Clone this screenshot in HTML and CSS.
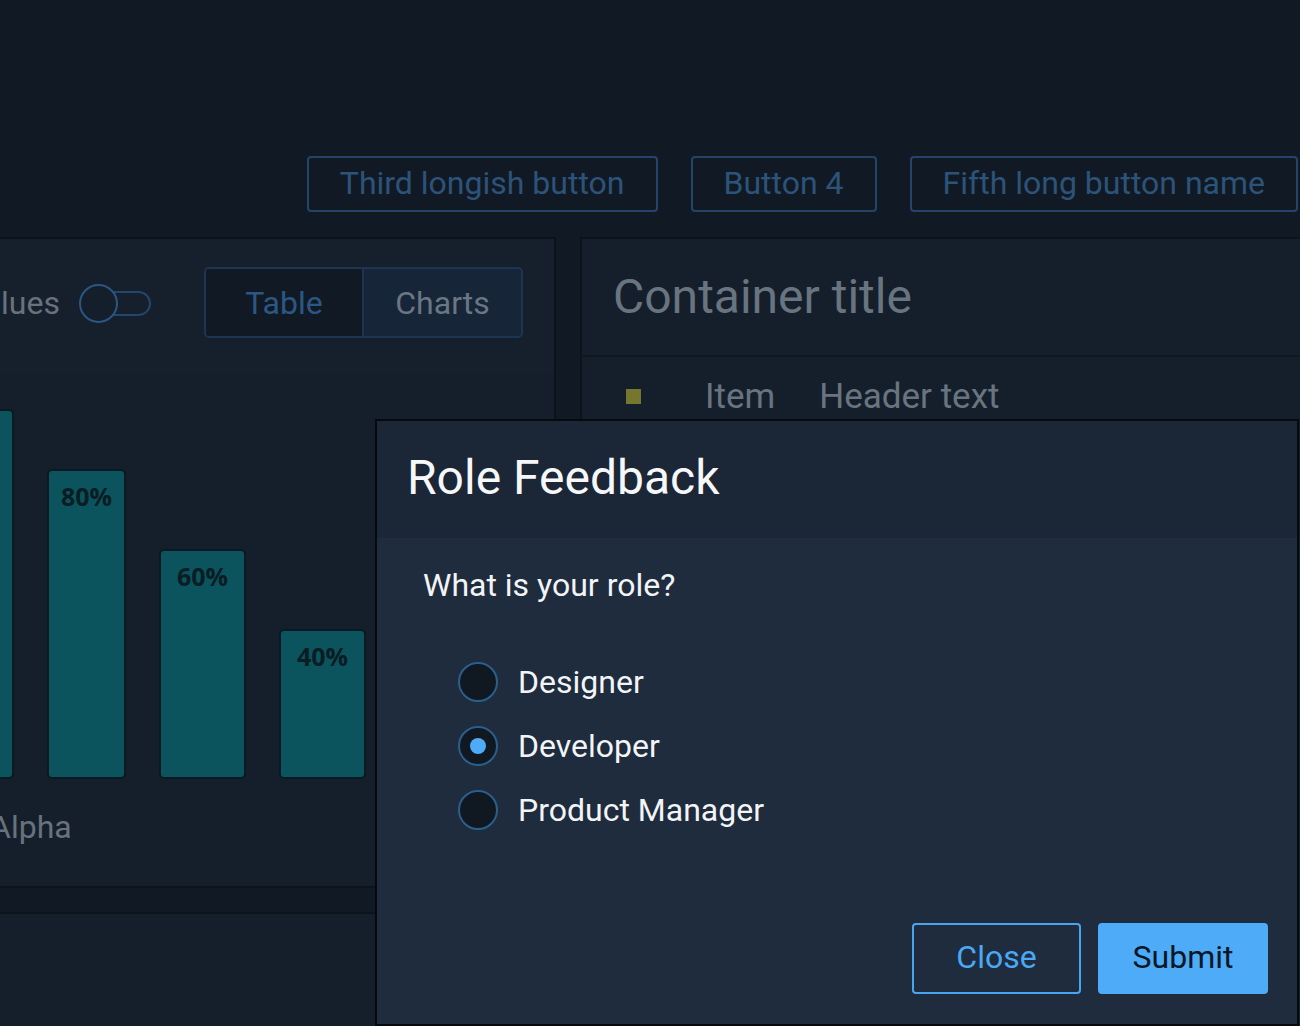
FILE: index.html
```html
<!DOCTYPE html>
<html lang="en">
<head>
<meta charset="utf-8">
<title>Role Feedback</title>
<link rel="stylesheet" href="styles.css">
</head>
<body>
<div class="topbar">
  <button class="ghost-btn">Third longish button</button>
  <button class="ghost-btn">Button 4</button>
  <button class="ghost-btn">Fifth long button name</button>
</div>

<div class="panels">
  <div class="col-left">
    <section class="panel chart-panel">
      <div class="chart-toolbar">
        <span class="muted-label">Values</span>
        <span class="toggle"><span class="toggle-track"></span><span class="toggle-knob"></span></span>
        <div class="segmented">
          <span class="seg seg-active">Table</span>
          <span class="seg seg-other">Charts</span>
        </div>
      </div>
      <div class="chart">
        <div class="bars">
          <div class="bar bar-wide bar-95"><span>95%</span></div>
          <div class="bar bar-narrow bar-80"><span>80%</span></div>
          <div class="bar bar-wide bar-60"><span>60%</span></div>
          <div class="bar bar-wide bar-40"><span>40%</span></div>
        </div>
        <div class="axis"><span class="muted-label">Alpha</span></div>
      </div>
    </section>
    <section class="panel lower-panel"></section>
  </div>

  <section class="panel right-panel">
    <header class="container-head">Container title</header>
    <div class="table-head">
      <span class="swatch"></span>
      <span class="th">Item</span>
      <span class="th">Header text</span>
    </div>
  </section>
</div>

<div class="modal">
  <div class="modal-head">Role Feedback</div>
  <div class="modal-body">
    <p class="question">What is your role?</p>
    <div class="radios">
      <label class="radio-row"><span class="radio"></span><span>Designer</span></label>
      <label class="radio-row"><span class="radio radio-on"></span><span>Developer</span></label>
      <label class="radio-row"><span class="radio"></span><span>Product Manager</span></label>
    </div>
    <div class="modal-foot">
      <button class="btn-outline">Close</button>
      <button class="btn-solid">Submit</button>
    </div>
  </div>
</div>
</body>
</html>
```

FILE: styles.css
```css
* { box-sizing: border-box; }

html, body {
  margin: 0;
  padding: 0;
}

body {
  width: 1300px;
  height: 1026px;
  overflow: hidden;
  background: #111a24;
  font-family: Roboto, "Liberation Sans", sans-serif;
  position: relative;
}

button {
  font-family: inherit;
  cursor: pointer;
}

/* top row of buttons */
.topbar {
  display: flex;
  justify-content: flex-end;
  gap: 33px;
  padding: 156px 2px 0 0;
}

.ghost-btn {
  height: 56px;
  padding: 0 31px 2px;
  background: transparent;
  border: 2px solid #24456a;
  border-radius: 4px;
  color: #2c5379;
  font-size: 32px;
  line-height: 1;
}

/* panels */
.panels {
  display: flex;
  gap: 24px;
  margin-top: 25px;
  margin-left: -90px;
}

.col-left {
  display: flex;
  flex-direction: column;
  gap: 24px;
  width: 646px;
  flex: none;
}

.panel {
  background: #151f2b;
  border: 2px solid #0c131a;
}

.chart-panel {
  height: 651px;
  display: flex;
  flex-direction: column;
}

.chart-toolbar {
  display: flex;
  align-items: center;
  padding: 28px 31px 35px 52px;
  background: #16202c;
}

.muted-label {
  color: #68727d;
  font-size: 32px;
  line-height: 38px;
}

.toggle {
  position: relative;
  width: 72px;
  height: 38px;
  margin-left: 19px;
  flex: none;
}

.toggle-track {
  position: absolute;
  left: 20px;
  right: 0;
  top: 7px;
  height: 25px;
  border: 2px solid #22476b;
  border-radius: 13px;
}

.toggle-knob {
  position: absolute;
  left: 0;
  top: 0;
  width: 39px;
  height: 39px;
  border: 2px solid #295682;
  border-radius: 50%;
  background: #151f2b;
}

.segmented {
  margin-left: auto;
  display: flex;
  height: 71px;
  border: 2px solid #1c3552;
  border-radius: 5px;
  overflow: hidden;
}

.seg {
  display: flex;
  align-items: center;
  justify-content: center;
  font-size: 32px;
}

.seg-active {
  width: 158px;
  background: #111a24;
  color: #2b5784;
  border-right: 2px solid #1c3552;
}

.seg-other {
  width: 157px;
  background: #172538;
  color: #6a7684;
}

.chart {
  flex: 1;
  padding: 6px 0 0 15px;
}

.bars {
  display: flex;
  align-items: flex-end;
  gap: 33px;
  height: 400px;
}

.bar {
  background: #0b545d;
  border: 2px solid #0a1a22;
  border-radius: 5px;
  display: flex;
  justify-content: center;
  padding-top: 9px;
  flex: none;
}

.bar span {
  font-family: "Open Sans", Roboto, sans-serif;
  font-weight: 700;
  font-size: 25px;
  line-height: 32px;
  color: #0a1c24;
}

.bar-wide { width: 87px; }
.bar-narrow { width: 79px; }

.bar-95 { height: 370px; }
.bar-80 { height: 310px; }
.bar-60 { height: 230px; }
.bar-40 { height: 150px; }

.axis {
  padding: 29px 0 0 63px;
}

.lower-panel {
  height: 116px;
  border-bottom: none;
}

.right-panel {
  width: 740px;
  flex: none;
  height: 789px;
  border-bottom: none;
}

.container-head {
  height: 118px;
  display: flex;
  align-items: center;
  padding: 0 31px 2px;
  font-size: 48px;
  color: #68747f;
  border-bottom: 2px solid #101820;
}

.table-head {
  display: flex;
  align-items: center;
  padding: 2px 0 0 44px;
  height: 76px;
}

.swatch {
  width: 15px;
  height: 15px;
  background: #76762e;
  margin-right: 64px;
  flex: none;
}

.th {
  font-size: 35px;
  color: #68747f;
  margin-right: 44px;
}

/* modal */
.modal {
  position: absolute;
  left: 375px;
  top: 419px;
  width: 924px;
  height: 607px;
  border: 2px solid #060a0f;
  display: flex;
  flex-direction: column;
  background: #1e2c3d;
}

.modal-head {
  height: 117px;
  flex: none;
  background: #1b2637;
  display: flex;
  align-items: center;
  padding: 0 0 4px 30px;
  font-size: 48px;
  color: #f5f7f9;
}

.modal-body {
  flex: 1;
  display: flex;
  flex-direction: column;
  padding: 28px 29px 30px 46px;
}

.question {
  margin: 0;
  font-size: 32px;
  line-height: 38px;
  color: #f2f4f6;
}

.radios {
  display: flex;
  flex-direction: column;
  gap: 24px;
  margin: 58px 0 0 35px;
}

.radio-row {
  display: flex;
  align-items: center;
  gap: 20px;
  font-size: 32px;
  color: #f2f4f6;
  height: 40px;
}

.radio {
  width: 40px;
  height: 40px;
  border-radius: 50%;
  border: 2px solid #2b5f8b;
  background: #101822;
  display: flex;
  align-items: center;
  justify-content: center;
  flex: none;
}

.radio-on::after {
  content: "";
  width: 16px;
  height: 16px;
  border-radius: 50%;
  background: #4dabf7;
}

.modal-foot {
  margin-top: auto;
  display: flex;
  justify-content: flex-end;
  gap: 17px;
}

.btn-outline,
.btn-solid {
  width: 170px;
  height: 71px;
  border-radius: 4px;
  font-size: 32px;
  padding: 0 0 3px;
}

.btn-outline {
  width: 169px;
  background: transparent;
  border: 2px solid #4aa5f0;
  color: #4aa8f4;
}

.btn-solid {
  background: #4dabf7;
  border: 2px solid #4dabf7;
  color: #0a1724;
}
```
